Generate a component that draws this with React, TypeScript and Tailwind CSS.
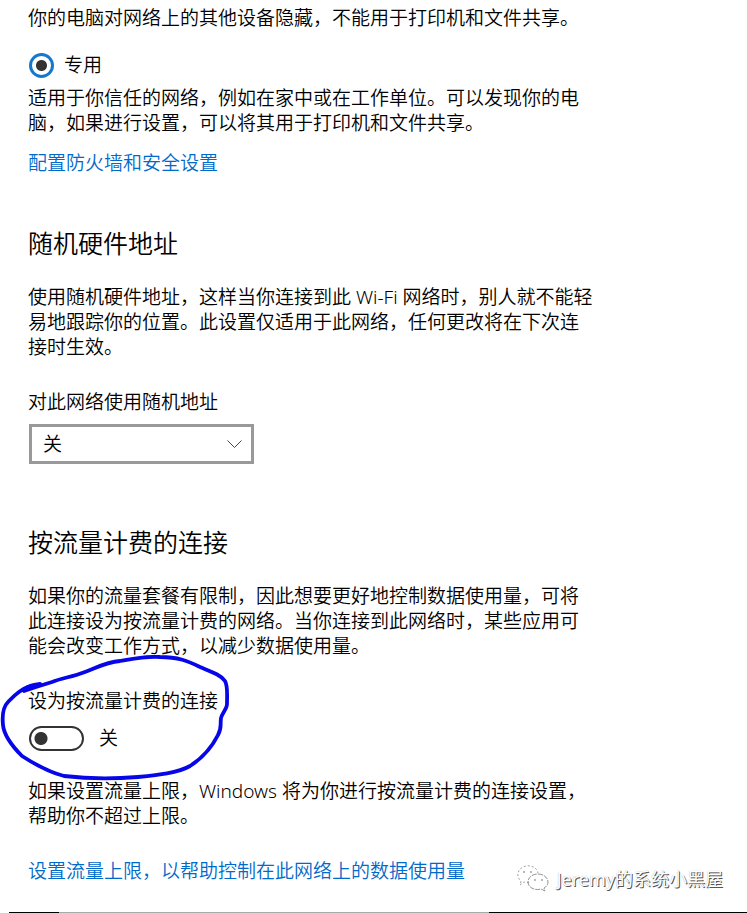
import type { ReactNode } from "react";

function Paragraph({ children, className = "" }: { children: ReactNode; className?: string }) {
  return <p className={"max-w-[568px] " + className}>{children}</p>;
}

function SectionTitle({ children }: { children: ReactNode }) {
  return <h2 className="text-[25px] leading-8 font-[350]">{children}</h2>;
}

function TextLink({ children }: { children: ReactNode }) {
  return (
    <a href="#" className="text-[#006acb]">
      {children}
    </a>
  );
}

function InkCircle() {
  return (
    <svg
      className="pointer-events-none absolute -top-[34px] -left-7"
      width="230"
      height="126"
      viewBox="0 655 230 126"
      fill="none"
      stroke="#0606e8"
      strokeLinecap="round"
      strokeLinejoin="round"
      aria-hidden="true"
    >
      <path
        strokeWidth="3.8"
        d="M24 691 L36 687 L52 682 C62 678 72 677 85 672 C96 668 106 662 120 661 C132 659 146 656 160 657 C178 657 188 661 200 667 C212 672 221 675 225 681 C228 686 227 695 227 704 C227 709 222 713 221 718 C220 725 222 728 218 735 C213 745 204 757 190 766 C178 773 158 775 138 777 C115 779 88 779 64 776 C48 772 36 765 22 756 C12 746 4 736 3 725 C2 715 4 706 8 702 C14 696 19 690 28 687"
      />
      <path strokeWidth="4" d="M24 690 C28 686 32 685 40 684 L30 688" />
    </svg>
  );
}

function Watermark() {
  return (
    <div className="absolute right-6 bottom-5 flex items-center gap-2">
      <svg width="32" height="28" viewBox="0 0 32 28" fill="none" stroke="#777" aria-hidden="true">
        <path
          strokeDasharray="2 2"
          strokeWidth="0.7"
          d="M12 17 C10 18 8 17 7 17 L3 20 L4 16 C-1 12 0 5 6 2 C12 -1 20 2 21 8"
        />
        <path
          strokeWidth="0.8"
          strokeDasharray="5 1"
          d="M21 9 C27 9 31 13 31 17 C31 20 29 22 27 23 L28 26 L24 24 C17 26 11 22 11 17 C11 12 16 9 21 9 Z"
        />
        <path strokeWidth="1.2" d="M6 7 h2 M13 7 h2 M17 15 h2 M24 15 h2" />
      </svg>
      <span className="text-[18px] leading-6 font-normal text-white [text-shadow:1px_1px_0_#555,0_0_1px_#aaa]">
        Jeremy的系统小黑屋
      </span>
    </div>
  );
}

export default function App() {
  return (
    <main
      lang="zh-CN"
      className="relative bg-white pt-1.5 text-[19px] leading-[25px] font-[350] text-black [font-family:'Noto_Sans','Noto_Sans_CJK_SC',sans-serif]"
    >
      <div className="px-7">
        <Paragraph>你的电脑对网络上的其他设备隐藏，不能用于打印机和文件共享。</Paragraph>

        <label className="mt-[22px] flex items-center gap-2.5">
          <input
            type="radio"
            name="profile"
            defaultChecked
            className="ml-px size-[25px] appearance-none rounded-full border-[3px] border-[#1478d0] bg-[radial-gradient(circle,#333_5px,transparent_6px)]"
          />
          专用
        </label>
        <Paragraph className="mt-2">
          适用于你信任的网络，例如在家中或在工作单位。可以发现你的电脑，如果进行设置，可以将其用于打印机和文件共享。
        </Paragraph>
        <p className="mt-[15px]">
          <TextLink>配置防火墙和安全设置</TextLink>
        </p>

        <div className="mt-[51px]">
          <SectionTitle>随机硬件地址</SectionTitle>
        </div>
        <Paragraph className="mt-[26px]">
          使用随机硬件地址，这样当你连接到此 Wi-Fi 网络时，别人就不能轻易地跟踪你的位置。此设置仅适用于此网络，任何更改将在下次连接时生效。
        </Paragraph>
        <label htmlFor="random" className="mt-[30px] block">
          对此网络使用随机地址
        </label>
        <div className="relative mt-[9px] ml-px w-[225px]">
          <select
            id="random"
            className="block h-10 w-full appearance-none border-[3px] border-[#999] bg-white px-[11px] font-[350] text-black"
          >
            <option>关</option>
          </select>
          <svg
            className="pointer-events-none absolute top-4 right-3"
            width="15"
            height="9"
            viewBox="0 0 15 9"
            fill="none"
            stroke="#444"
            aria-hidden="true"
          >
            <path d="M0.5 0.5 L7.5 7.5 L14.5 0.5" />
          </svg>
        </div>

        <div className="mt-[62px]">
          <SectionTitle>按流量计费的连接</SectionTitle>
        </div>
        <Paragraph className="mt-[26px]">
          如果你的流量套餐有限制，因此想要更好地控制数据使用量，可将此连接设为按流量计费的网络。当你连接到此网络时，某些应用可能会改变工作方式，以减少数据使用量。
        </Paragraph>

        <div className="relative mt-[30px]">
          <label htmlFor="metered" className="block">
            设为按流量计费的连接
          </label>
          <div className="mt-3 flex items-center gap-[15px]">
            <input
              id="metered"
              type="checkbox"
              role="switch"
              className="ml-px h-[25px] w-[55px] appearance-none rounded-full border-2 border-[#333] bg-[radial-gradient(circle_at_10px_50%,#333_6px,transparent_7px)]"
            />
            <span>关</span>
          </div>
          <InkCircle />
        </div>

        <Paragraph className="mt-7">
          如果设置流量上限，Windows 将为你进行按流量计费的连接设置，帮助你不超过上限。
        </Paragraph>
        <p className="mt-[30px]">
          <TextLink>设置流量上限，以帮助控制在此网络上的数据使用量</TextLink>
        </p>
      </div>

      <div className="mt-7 ml-[9px] flex h-px">
        <div className="w-[50px] bg-black" />
        <div className="w-[430px] bg-[#aaa]" />
        <div className="grow bg-black" />
      </div>
      <Watermark />
    </main>
  );
}
